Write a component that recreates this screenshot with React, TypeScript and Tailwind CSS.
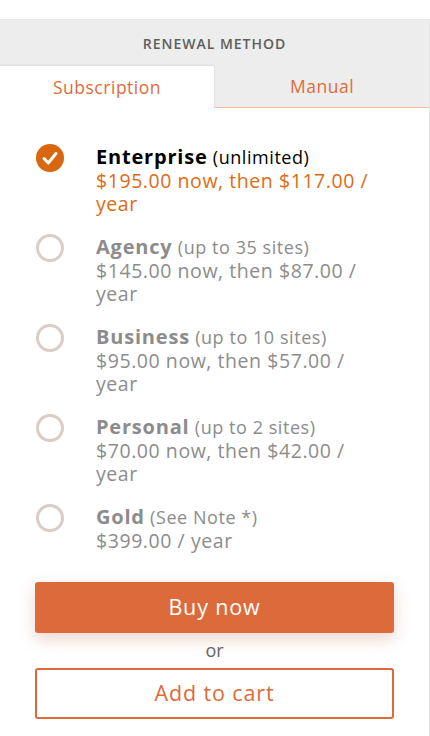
import React from 'react';

const plans = [
  { name: 'Enterprise', note: '(unlimited)', price: '$195.00 now, then $117.00 / year', selected: true },
  { name: 'Agency', note: '(up to 35 sites)', price: '$145.00 now, then $87.00 / year' },
  { name: 'Business', note: '(up to 10 sites)', price: '$95.00 now, then $57.00 / year' },
  { name: 'Personal', note: '(up to 2 sites)', price: '$70.00 now, then $42.00 / year' },
  { name: 'Gold', note: '(See Note *)', price: '$399.00 / year' },
];

const Check = () => (
  <svg width="28" height="28" viewBox="0 0 28 28">
    <circle cx="14" cy="14" r="14" fill="#d9670f" />
    <path d="M8 14.5 L12.3 19 L20 9.5" fill="none" stroke="#fff" strokeWidth="3" strokeLinecap="round" strokeLinejoin="round" />
  </svg>
);

export default function App() {
  return (
    <div className="min-h-screen bg-white pt-[19px] font-['Open_Sans','Noto_Sans',sans-serif]">
      <div className="w-[430px] min-h-[717px] border-t border-r border-[#e6e6e6]">
        {/* Header */}
        <div className="bg-[#ededed]">
          <div className="h-[46px] flex items-center justify-center text-[14px] font-semibold tracking-[0.07em] text-[#5e5e5e]">
            RENEWAL METHOD
          </div>
          <div className="flex h-[42px]">
            <div className="w-[214px] bg-white flex items-center justify-center text-[17.5px] tracking-[0.03em] text-[#e06b3c] shadow-[0_-1px_2px_rgba(0,0,0,0.08)]">
              Subscription
            </div>
            <div className="flex-1 flex items-center justify-center text-[17.5px] tracking-[0.03em] text-[#e06b3c] border-b border-[#f4bba3] border-l border-l-[#e3e3e3]">
              Manual
            </div>
          </div>
        </div>

        {/* Plans */}
        <div className="pl-[36px] pr-[35px] pt-[37px] flex flex-col gap-[20px]">
          {plans.map((p) => (
            <div key={p.name} className="flex gap-[32px]">
              <div className="w-[28px] h-[26px] flex items-center shrink-0">
                {p.selected ? (
                  <Check />
                ) : (
                  <div className="w-[28px] h-[28px] rounded-full border-[3px] border-[#dacdc5]" />
                )}
              </div>
              <div className="w-[290px] tracking-[0.035em]">
                <div className={`text-[18px] leading-[24px] ${p.selected ? 'text-black' : 'text-[#8c8c8c]'}`}>
                  <span className="text-[20px] font-bold tracking-[0.04em]">{p.name}</span> {p.note}
                </div>
                <div className={`text-[19.5px] leading-[23px] ${p.selected ? 'text-[#e06b14]' : 'text-[#8c8c8c]'}`}>
                  {p.price}
                </div>
              </div>
            </div>
          ))}
        </div>

        {/* Actions */}
        <div className="px-[35px] pt-[30px] pb-[18px] flex flex-col items-stretch">
          <button className="h-[51px] rounded-[3px] bg-[#dd6a3b] text-white text-[21.5px] tracking-[0.04em] shadow-[0_6px_16px_rgba(180,90,50,0.25)]">
            Buy now
          </button>
          <div className="text-center text-[18px] text-[#666] leading-[35px]">or</div>
          <button className="h-[51px] rounded-[3px] border-2 border-[#dd6a3b] bg-white text-[#dd6a3b] text-[21.5px] tracking-[0.04em]">
            Add to cart
          </button>
        </div>
      </div>
    </div>
  );
}
